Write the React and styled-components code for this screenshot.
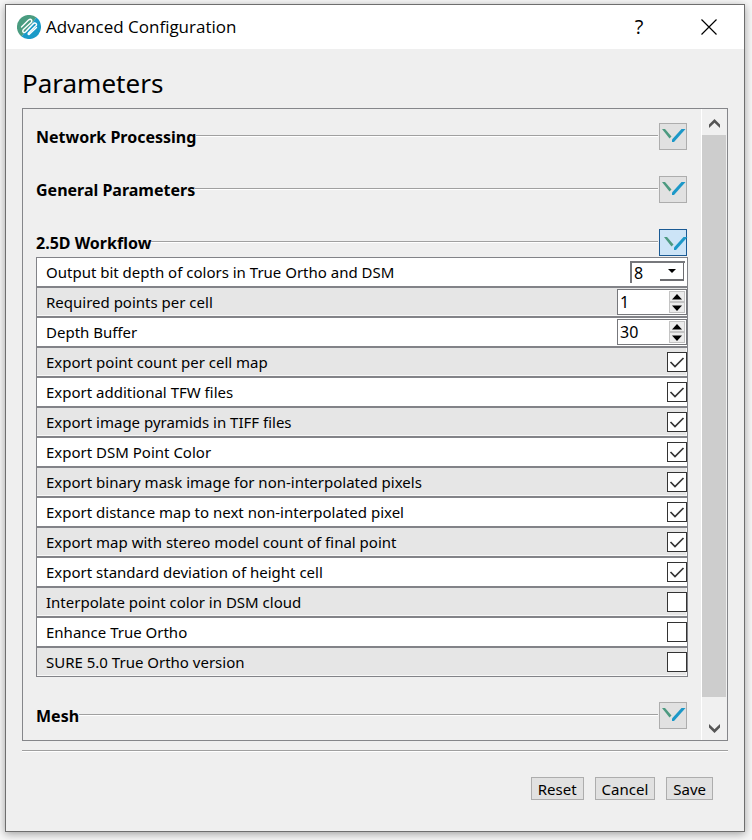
import { useState } from "react";
import styled, { createGlobalStyle } from "styled-components";

const GlobalStyle = createGlobalStyle`
  * {
    box-sizing: border-box;
  }

  body {
    margin: 0;
    background: #f6f6f6;
    color: #000;
    font-family: "Noto Sans", "Open Sans", sans-serif;
    font-size: 15px;
    line-height: 20px;
  }

  button,
  input,
  select {
    margin: 0;
    padding: 0;
    color: inherit;
    font: inherit;
  }
`;

const Desktop = styled.div`
  padding: 4px 7px 8px 5px;
`;

const Window = styled.main`
  border: 1px solid #6e6e6e;
  background: #efefef;
  box-shadow: 0 2px 8px rgba(0, 0, 0, 0.35);
`;

const TitleBar = styled.header`
  display: flex;
  align-items: center;
  height: 44px;
  padding-left: 11px;
  background: #fff;
`;

const WindowTitle = styled.span`
  flex: 1;
  padding-left: 5px;
  font-family: "Open Sans", "Noto Sans", sans-serif;
  font-size: 17px;
  line-height: 24px;
`;

const TitleButton = styled.button`
  display: grid;
  place-items: center;
  width: 70px;
  height: 44px;
  border: none;
  background: transparent;
  font-family: "Open Sans", "Noto Sans", sans-serif;
  font-size: 20px;
`;

const Content = styled.div`
  padding: 16px 16px 31px;
`;

const Heading = styled.h1`
  margin: 0;
  font-size: 26px;
  font-weight: 400;
  line-height: 36px;
`;

const Panel = styled.div`
  display: flex;
  margin-top: 7px;
  border: 1px solid #85868a;
`;

const Sections = styled.div`
  flex: 1;
  display: flex;
  flex-direction: column;
  gap: 26px;
  padding: 14px 13px 11px;
`;

const SectionHeader = styled.div`
  display: flex;
  align-items: center;
  height: 27px;
`;

const SectionTitle = styled.h2`
  margin: 0;
  font-size: 16px;
  font-weight: 700;
  line-height: 20px;
`;

const SectionLine = styled.div`
  flex: 1;
  height: 2px;
  margin: 0 1px 2px 0;
  border-top: 1px solid #a0a0a0;
  border-bottom: 1px solid #fff;
`;

const ToggleButton = styled.button`
  display: grid;
  place-items: center;
  width: 28px;
  height: 27px;
  margin-right: 1px;
  padding: ${({ $active }) => ($active ? "2px 0 0 2px" : "0")};
  border: 1px solid ${({ $active }) => ($active ? "#1a5a94" : "#adadad")};
  background: ${({ $active }) => ($active ? "#cce4f7" : "#e1e1e1")};
`;

const Rows = styled.div`
  display: flex;
  flex-direction: column;
  margin: 1px 0 -1px;
`;

const Row = styled.div`
  display: flex;
  align-items: center;
  height: 30px;
  padding-left: 9px;
  border: 1px solid #828388;
  background: #fff;

  &:nth-child(even) {
    background: #e6e6e6;
    box-shadow: inset -1px -1px #f8f8f8;
  }
`;

const RowLabel = styled.label`
  flex: 1;
`;

const SelectBox = styled.div`
  display: flex;
  position: relative;
  width: 55px;
  height: 22px;
  margin-right: 2px;
  border-top: 2px solid #77787c;
  border-left: 2px solid #77787c;
`;

const Select = styled.select`
  width: 100%;
  padding-left: 2px;
  border: none;
  border-radius: 0;
  background: #fff;
  font-size: 16px;
  appearance: none;
`;

const SelectArrow = styled.span`
  position: absolute;
  top: 0;
  right: 1px;
  display: grid;
  place-items: center;
  width: 24px;
  height: 18px;
  border-right: 1px solid #6c6d71;
  border-bottom: 2px solid #6c6d71;
  background: #fff;
  pointer-events: none;
`;

const SpinBox = styled.div`
  display: flex;
  width: 70px;
  height: 26px;
  padding: 1px;
  border: 1px solid #77787c;
  background: #fff;
`;

const SpinInput = styled.input`
  flex: 1;
  min-width: 0;
  padding-left: 1px;
  border: none;
  background: transparent;
  font-size: 16px;
`;

const SpinButtons = styled.div`
  display: flex;
  flex-direction: column;
  width: 16px;
`;

const SpinButton = styled.button`
  flex: 1;
  display: grid;
  place-items: center;
  border: 1px solid #c4c4c4;
  background: #ececec;
`;

const CheckBox = styled.span`
  display: grid;
  width: 20px;
  height: 20px;

  > * {
    grid-area: 1 / 1;
  }

  svg {
    pointer-events: none;
  }
`;

const CheckInput = styled.input`
  width: 20px;
  height: 20px;
  border: 1px solid #333;
  background: #fff;
  appearance: none;

  &:not(:checked) + svg {
    visibility: hidden;
  }
`;

const Scrollbar = styled.div`
  display: flex;
  flex-direction: column;
  width: 26px;
  padding-right: 1px;
  border-left: 1px solid #fff;
  background: #f0f0f0;
`;

const ScrollButton = styled.button`
  display: grid;
  place-items: center;
  height: 26px;
  padding-top: 2px;
  border: none;
  background: transparent;
`;

const ScrollTrack = styled.div`
  flex: 1;
  display: flex;
  flex-direction: column;
  padding-bottom: 17px;
`;

const ScrollThumb = styled.div`
  flex: 1;
  background: #cdcdcd;
`;

const Divider = styled.hr`
  height: 2px;
  margin: 9px 0 25px;
  border: none;
  border-top: 1px solid #a0a0a0;
  border-bottom: 1px solid #fff;
`;

const Footer = styled.footer`
  display: flex;
  justify-content: flex-end;
  gap: 11px;
  padding-right: 15px;
`;

const FooterButton = styled.button`
  height: 23px;
  padding: 0 6px;
  border: 1px solid #adadad;
  background: #e1e1e1;
  line-height: 20px;
`;

const Logo = () => (
  <svg width="24" height="24" viewBox="0 0 24 24" aria-hidden="true">
    <path d="M19.500 2.600A12 12 0 1 0 4.500 21.400Z" fill="#4a9c80" />
    <path d="M19.500 2.600A12 12 0 0 1 4.500 21.400Z" fill="#1a9ac8" />
    <path
      d="M4.500 12 11.500 5Q13.500 3.500 14.500 5T13.500 8L6.500 14.500Q5 16.500 6.500 17.300T9 16.500L15.500 9.500Q17.500 7 19 8.500T18 11.500L11.500 18Q10.500 19.500 12 19.500L19.500 12.500"
      fill="none"
      stroke="#fff"
      strokeWidth="1.400"
      strokeLinecap="round"
    />
  </svg>
);

const ToggleIcon = () => (
  <svg width="26" height="25" viewBox="0 0 26 25" aria-hidden="true">
    <path d="M2 5H5L11.500 12.500 9.500 14.500Z" fill="#4c9a80" />
    <path d="M21.500 5H25.500L14 18H12V15.500Z" fill="#1c98c8" />
  </svg>
);

const Triangle = ({ up }) => (
  <svg width="10" height="6" viewBox="0 0 10 6" aria-hidden="true">
    <path d={up ? "M0 5.500H10L5 0Z" : "M0 .5H10L5 6Z"} fill="#000" />
  </svg>
);

const Chevron = ({ up }) => (
  <svg width="13" height="11" viewBox="0 0 13 11" aria-hidden="true">
    <path
      d={up ? "M6.500 1 12 6.500V10L6.500 4.800 1 10V6.500Z" : "M6.500 10 12 4.500V1L6.500 6.200 1 1V4.500Z"}
      fill="#555"
    />
  </svg>
);

const checks = [
  { id: "pointCount", label: "Export point count per cell map", on: true },
  { id: "tfw", label: "Export additional TFW files", on: true },
  { id: "pyramids", label: "Export image pyramids in TIFF files", on: true },
  { id: "dsmColor", label: "Export DSM Point Color", on: true },
  { id: "binaryMask", label: "Export binary mask image for non-interpolated pixels", on: true },
  { id: "distanceMap", label: "Export distance map to next non-interpolated pixel", on: true },
  { id: "stereoCount", label: "Export map with stereo model count of final point", on: true },
  { id: "deviation", label: "Export standard deviation of height cell", on: true },
  { id: "interpolate", label: "Interpolate point color in DSM cloud", on: false },
  { id: "enhance", label: "Enhance True Ortho", on: false },
  { id: "sure5", label: "SURE 5.0 True Ortho version", on: false },
];

const Section = ({ title, active, onToggle, children }) => (
  <section>
    <SectionHeader>
      <SectionTitle>{title}</SectionTitle>
      <SectionLine />
      <ToggleButton $active={active} aria-label={`Toggle ${title}`} onClick={onToggle}>
        <ToggleIcon />
      </ToggleButton>
    </SectionHeader>
    {children}
  </section>
);

const SpinRow = ({ id, label, initial }) => {
  const [value, setValue] = useState(initial);

  return (
    <Row>
      <RowLabel htmlFor={id}>{label}</RowLabel>
      <SpinBox>
        <SpinInput
          id={id}
          type="text"
          inputMode="numeric"
          value={value}
          onChange={(e) => setValue(Number(e.target.value) || 0)}
        />
        <SpinButtons>
          <SpinButton aria-label="Increase" onClick={() => setValue(value + 1)}>
            <Triangle up />
          </SpinButton>
          <SpinButton aria-label="Decrease" onClick={() => setValue(value - 1)}>
            <Triangle />
          </SpinButton>
        </SpinButtons>
      </SpinBox>
    </Row>
  );
};

const CheckRow = ({ id, label, on }) => (
  <Row>
    <RowLabel htmlFor={id}>{label}</RowLabel>
    <CheckBox>
      <CheckInput id={id} type="checkbox" defaultChecked={on} />
      <svg width="20" height="20" viewBox="0 0 20 20" aria-hidden="true">
        <path d="M3.500 10 8 14.500 16.500 6" fill="none" stroke="#333" strokeWidth="1.700" />
      </svg>
    </CheckBox>
  </Row>
);

const App = () => {
  const [open, setOpen] = useState(true);

  return (
    <Desktop>
      <GlobalStyle />
      <Window>
        <TitleBar>
          <Logo />
          <WindowTitle>Advanced Configuration</WindowTitle>
          <TitleButton aria-label="Help">?</TitleButton>
          <TitleButton aria-label="Close">
            <svg width="16" height="16" viewBox="0 0 16 16" aria-hidden="true">
              <path d="M.5 .5 15.500 15.500M15.500 .5 .5 15.500" stroke="#000" strokeWidth="1.200" />
            </svg>
          </TitleButton>
        </TitleBar>
        <Content>
          <Heading>Parameters</Heading>
          <Panel>
            <Sections>
              <Section title="Network Processing" />
              <Section title="General Parameters" />
              <Section title="2.5D Workflow" active={open} onToggle={() => setOpen(!open)}>
                {open && (
                  <Rows>
                    <Row>
                      <RowLabel htmlFor="bitDepth">Output bit depth of colors in True Ortho and DSM</RowLabel>
                      <SelectBox>
                        <Select id="bitDepth" defaultValue="8">
                          <option>8</option>
                          <option>16</option>
                        </Select>
                        <SelectArrow>
                          <svg width="8" height="4" viewBox="0 0 8 4" aria-hidden="true">
                            <path d="M0 0H8L4 4Z" />
                          </svg>
                        </SelectArrow>
                      </SelectBox>
                    </Row>
                    <SpinRow id="pointsPerCell" label="Required points per cell" initial={1} />
                    <SpinRow id="depthBuffer" label="Depth Buffer" initial={30} />
                    {checks.map((check) => (
                      <CheckRow key={check.id} {...check} />
                    ))}
                  </Rows>
                )}
              </Section>
              <Section title="Mesh" />
            </Sections>
            <Scrollbar>
              <ScrollButton aria-label="Scroll up">
                <Chevron up />
              </ScrollButton>
              <ScrollTrack>
                <ScrollThumb />
              </ScrollTrack>
              <ScrollButton aria-label="Scroll down">
                <Chevron />
              </ScrollButton>
            </Scrollbar>
          </Panel>
          <Divider />
          <Footer>
            <FooterButton>Reset</FooterButton>
            <FooterButton>Cancel</FooterButton>
            <FooterButton>Save</FooterButton>
          </Footer>
        </Content>
      </Window>
    </Desktop>
  );
};

export default App;
